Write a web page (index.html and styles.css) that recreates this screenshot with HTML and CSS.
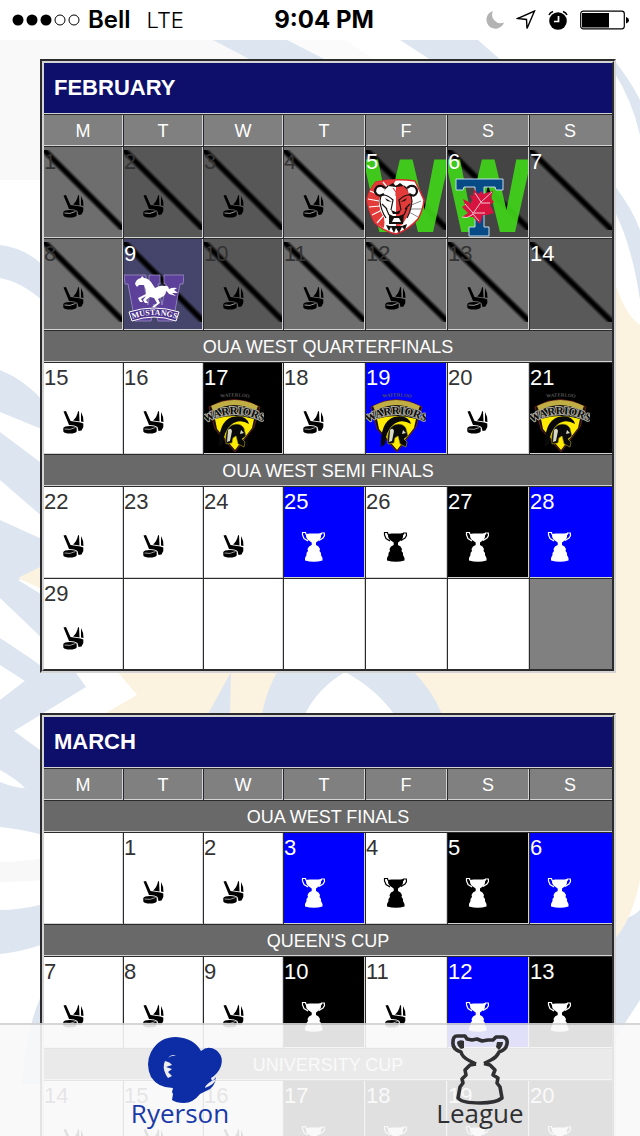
FILE: index.html
```html
<!DOCTYPE html>
<html lang="en">
<head>
<meta charset="utf-8">
<meta name="viewport" content="width=device-width, initial-scale=1">
<title>Schedule</title>
<link rel="stylesheet" href="styles.css">
</head>
<body>
<svg class="sprite" aria-hidden="true">
  <symbol id="puck" viewBox="0 0 60 60">
    <path d="M19.500 18.500L22 18L26.500 28L36.500 29.500L39.300 30.500V34L37.500 37.500L34.500 38L33.500 34Q31 32 25 32L24 29.500Z"/>
    <path d="M34 18.500L35 18L35.500 28.500L29 27.500Q33 24 34 18.500ZM37 19Q39.500 23 39.500 29L37 28.500Z"/>
    <path d="M19.300 35Q20 33 26 33Q32.300 33 32.700 35V38.500Q31 40.500 26 40.500Q20.500 40.500 19.300 38.500Z"/>
    <path class="puck-line" d="M20.500 36Q26 37.500 31.500 34.500" fill="none"/>
  </symbol>
  <symbol id="trophy" viewBox="0 0 60 60">
    <path d="M22 17L25.500 16.500L34.500 16.500L37 16Q37.500 20.500 36 22.500L32 25.500V28L34.500 29.500L36 32L35.500 34L37 36L37 38L38.500 41V43.500Q30 46 21 43.500V41L22.500 38V36L24 34L23.500 32L25 29.500L27.700 28V25.500L23.500 22.500Q21.500 20.500 22 17Z"/>
    <path d="M22 17.500L21.500 15.500H18.500V18L20 21.500L24 24M37 18L37.500 16H40.300L40.500 18.500L39 21L35 23.500" fill="none" stroke="currentColor" stroke-width="1.200"/>
  </symbol>
  <symbol id="lion" viewBox="0 0 60 60">
    <path d="M10 5Q30 1 49 4Q53 12 58 23Q57 33 52 42Q42 53 30 57Q17 54 9 46Q3 36 1 23Q3 13 10 5Z" fill="#fff" stroke="#e0252b" stroke-width="1.500"/>
    <path d="M10 5Q20 3 30 3L26 10Q14 14 13 24Q13 34 18 40L19 52L9 46Q3 36 1 23Q3 13 10 5Z" fill="#e33a3a"/>
    <path d="M4 14L14 18M2 22L13 24M3 30L14 29M6 38L16 33M11 46L18 38M18 52L20 44M17 5L22 11" stroke="#fff" stroke-width="1.200"/>
    <path d="M30 8L38 9Q45 14 46 23Q45 34 41 40L36 48L30 50Z" fill="#e33a3a"/>
    <path d="M30 8L22 9Q15 14 14 23Q15 34 20 40L25 48L30 50Z" fill="#fff"/>
    <path d="M22 9Q15 14 14 24Q15 34 20 41M38 9Q45 14 46 24Q45 34 41 41M17 18Q22 18 27 23L25 33M43 18Q38 18 33 23L35 33M16 27L21 32M44 27L39 32M23 38L20 31M38 38L41 31" fill="none" stroke="#16110f" stroke-width="1.200"/>
    <path d="M18 17Q12 21 9 15Q9 8 16 9L19 11M43 17Q49 21 51 15Q51 8 44 9L41 11" fill="#fff" stroke="#16110f" stroke-width="2.200"/>
    <path d="M19 21L26 25L21 24ZM41 21L34 25L39 24ZM25 33L30 35L35 33L33 37H27ZM23 37L27 39H33L38 37L37 47H23ZM20 48L23 54L25 50L28 56L30 51L33 56L36 50L39 53L41 47L36 49H24ZM22 9L27 6L30 9L34 6L38 9L30 10Z" fill="#16110f"/>
    <path d="M26 45L28 41H33L35 45Z" fill="#fff"/>
    <path d="M27 11L30 15L33 11M30 15V19" fill="none" stroke="#e33a3a" stroke-width="1.200"/>
    <path d="M43 29L55 24M43 32L56 32M43 35L52 40" stroke="#555" stroke-width=".7"/>
  </symbol>
  <symbol id="toronto" viewBox="0 0 60 60">
    <path d="M8 2H55V13H48L47 10H36V50H41V59H21V50H27V10H16L15 13H8Z" fill="#064a86" stroke="#c5d9ec" stroke-width="1"/>
    <path d="M26 12L30 17L34 14L35 17L45 14L43 21L46 25L42 28L46 36L39 38L35 38L32 47L25 40L14 40L20 36L14 30L17 28L15 22L21 25L23 27L24 23L22 18L25 19Z" fill="#d6143f"/>
    <path d="M24 38L33 25L44 15M33 25L27 16M33 26L42 26M25 36L17 27M26 36L37 36M25 37L31 44M24 38Q19 42 14 40" fill="none" stroke="#fbd9e2" stroke-width=".9"/>
  </symbol>
  <symbol id="mustangs" viewBox="0 0 60 60">
    <path d="M0 6H22V15H20L24 36L27 15H25V6H36V15H34L38 36L42 15H40V6H60L59 15H56L49 52H34L30 35L27 52H11L4 15H1Z" fill="#5c4099" stroke="#a99bd0" stroke-width=".7"/>
    <path d="M11 15Q12 10 17 9L18 7L20 9Q25 9 29 16L31 19Q36 16 41 17Q44 16 45 20Q49 18 53 19L50 21L54 24L48 24L52 27L45 25Q43 22 42 22Q42 26 38 28L34 30L36 34L31 38H28L33 34L30 29L26 28L22 31L24 34L21 34L19 31L22 27L17 30L19 33H16L14 29L22 25Q22 20 20 16L15 16L13 18Z" fill="#fff"/>
    <path d="M5 43Q30 35 55 43L52 52Q30 44 8 52Z" fill="#4c338b" stroke="#fff" stroke-width="1"/>
    <path id="mustangs-arc" d="M8 50Q30 42 53 50" fill="none"/>
    <text class="logo-text" font-size="8" fill="#fff" text-anchor="middle"><textPath href="#mustangs-arc" startOffset="50%">MUSTANGS</textPath></text>
  </symbol>
  <symbol id="warriors" viewBox="0 0 60 60">
    <path id="waterloo-arc" d="M12 6Q30 1 50 6" fill="none"/>
    <text class="logo-text" font-size="5" fill="#555" text-anchor="middle"><textPath href="#waterloo-arc" startOffset="50%">WATERLOO</textPath></text>
    <path d="M5 14Q30 -1 56 14L50 34L31 59L11 36Z" fill="#15120c" stroke="#7d2520" stroke-width=".8"/>
    <path d="M7 13Q30 1 54 13L52 18Q30 6 9 18Z" fill="#c0ae45"/>
    <path d="M11 26Q30 20 50 26L48 35L31 57L13 36Z" fill="#ffec00"/>
    <path id="warriors-arc" d="M1 30Q30 13 60 29" fill="none"/>
    <text class="logo-text" font-size="11" fill="#0b0b0b" stroke="#aaa99b" stroke-width="2" paint-order="stroke" text-anchor="middle"><textPath href="#warriors-arc" startOffset="50%">WARRIORS</textPath></text>
    <path d="M15 54Q14 29 28 24Q42 21 45 31Q35 25 27 32Q20 38 19 51Z" fill="#090909"/>
    <path d="M22 51Q20 36 28 32Q36 29 40 35L42 43L38 46L41 49L40 54L34 51L32 43L29 45L28 50Z" fill="#090909" stroke="#b7a70a" stroke-width=".6"/>
    <path d="M24 37Q27 34 28 38L26 48L23 49ZM37 37L40 40L36 41Z" fill="#d8d8c6"/>
  </symbol>
</svg>

<div class="app">
  <header class="status">
    <div class="status-left">
      <svg width="68" height="12" viewBox="0 0 68 12" role="img" aria-label="Signal strength">
        <circle cx="6" cy="6" r="5.500"/><circle cx="20" cy="6" r="5.500"/><circle cx="34" cy="6" r="5.500"/>
        <circle cx="48" cy="6" r="5" fill="none" stroke="#000"/><circle cx="62" cy="6" r="5" fill="none" stroke="#000"/>
      </svg>
      <span class="carrier">Bell</span>
      <span class="network">LTE</span>
    </div>
    <time class="clock">9:04 PM</time>
    <div class="status-right">
      <svg width="18" height="20" viewBox="0 0 18 20" aria-hidden="true"><path d="M7 1A9 9 0 1 0 18 12.500A8.500 8.500 0 0 1 7 1Z" fill="#b3b3b3"/></svg>
      <svg width="20" height="20" viewBox="0 0 20 20" aria-hidden="true"><path d="M18.500 1L11 18.500L10.500 9.500L1.500 8.500Z" fill="none" stroke="#000" stroke-width="1.400"/></svg>
      <svg width="20" height="20" viewBox="0 0 20 20" aria-hidden="true"><circle cx="10" cy="11" r="8.800"/><path d="M10.500 6V11.500H6" fill="none" stroke="#fff" stroke-width="1.700"/><path d="M1 5Q2 2.500 5 1.500M19 5Q18 2.500 15 1.500" fill="none" stroke="#000" stroke-width="1.500"/></svg>
      <svg width="49" height="20" viewBox="0 0 49 20" role="img" aria-label="Battery"><rect x=".7" y="1.200" width="43.600" height="17.600" rx="2.500" fill="none" stroke="#000" stroke-width="1.200"/><rect x="2" y="3" width="27" height="14.500"/><path d="M46 7Q49 8 49 10.200Q49 12.500 46 13.500Z"/></svg>
    </div>
  </header>

  <div class="stage">
    <svg class="backdrop" viewBox="0 0 640 1096" preserveAspectRatio="xMidYMin slice" aria-hidden="true">
      <rect width="640" height="1096" fill="#fff"/>
      <path d="M0 0H345L372 19V140H0Z" fill="#f9f9f9"/>
      <path d="M283 0H345L372 19H325Z" fill="#fbfbfb"/>
      <g fill="#dce5f0">
        <path d="M213 0H287L330 22H255ZM400 0H478L503 22H434Z"/>
        <path d="M614 32Q632 60 640 95V60Q630 40 614 20ZM614 170Q632 205 640 260V190Q632 168 614 145Z"/>
        <path d="M0 205Q25 208 44 226V262Q22 242 0 238ZM0 330Q25 340 44 362V390L0 372Z"/>
        <path d="M0 392L44 425V478L0 440ZM0 480L44 500V535L18 540L44 556V600L0 558ZM0 598L30 618L44 628V642L25 641L0 625Z"/>
        <path d="M0 660L35 633H76L86 647L14 691L44 713V795Q20 789 0 787V742Q15 748 25 748Q15 738 0 730Z"/>
        <path d="M0 870Q20 870 44 864V904Q20 912 0 914ZM44 950Q26 985 22 1044H44ZM614 880Q630 880 640 870V960L614 1000Z"/>
      </g>
      <path d="M44 525L18 538L44 550Z" fill="#fbf3e0"/>
      <path d="M116 630L137 655L104 674H614V900Q632 880 640 840V285Q625 275 614 240V630Z" fill="#fbf3e0"/>
      <path d="M231 632L208 674H230ZM278 630Q266 652 262 674H442Q432 650 412 630Z" fill="#dce5f0"/>
      <path d="M345 632Q318 648 305 674H394Q375 648 345 632Z" fill="#fff"/>
      <path d="M0 822Q20 822 44 818V840Q20 842 0 842Z" fill="#f8f8f8"/>
    </svg>

    <main class="calendar">
      <section class="month">
        <table>
          <colgroup><col class="narrow"><col class="narrow"><col class="narrow"><col><col><col><col></colgroup>
          <thead>
            <tr class="title"><th colspan="7">FEBRUARY</th></tr>
            <tr class="weekdays"><th>M</th><th>T</th><th>W</th><th>T</th><th>F</th><th>S</th><th>S</th></tr>
          </thead>
          <tbody>
            <tr class="week">
              <td class="past"><div class="day"><span>1</span><svg><use href="#puck"/></svg></div></td>
              <td class="past dim"><div class="day"><span>2</span><svg><use href="#puck"/></svg></div></td>
              <td class="past dim"><div class="day"><span>3</span><svg><use href="#puck"/></svg></div></td>
              <td class="past"><div class="day"><span>4</span><svg><use href="#puck"/></svg></div></td>
              <td class="past game"><div class="day"><b class="win">W</b><span>5</span><svg><use href="#lion"/></svg></div></td>
              <td class="past game"><div class="day"><b class="win">W</b><span>6</span><svg><use href="#toronto"/></svg></div></td>
              <td class="past off"><div class="day"><span>7</span></div></td>
            </tr>
            <tr class="week">
              <td class="past"><div class="day"><span>8</span><svg><use href="#puck"/></svg></div></td>
              <td class="past home-past"><div class="day"><span>9</span><svg><use href="#mustangs"/></svg></div></td>
              <td class="past dim"><div class="day"><span>10</span><svg><use href="#puck"/></svg></div></td>
              <td class="past"><div class="day"><span>11</span><svg><use href="#puck"/></svg></div></td>
              <td class="past"><div class="day"><span>12</span><svg><use href="#puck"/></svg></div></td>
              <td class="past"><div class="day"><span>13</span><svg><use href="#puck"/></svg></div></td>
              <td class="past off"><div class="day"><span>14</span></div></td>
            </tr>
            <tr class="band"><th colspan="7">OUA WEST QUARTERFINALS</th></tr>
            <tr class="week">
              <td><div class="day"><span>15</span><svg><use href="#puck"/></svg></div></td>
              <td><div class="day"><span>16</span><svg><use href="#puck"/></svg></div></td>
              <td class="away"><div class="day"><span>17</span><svg><use href="#warriors"/></svg></div></td>
              <td><div class="day"><span>18</span><svg><use href="#puck"/></svg></div></td>
              <td class="home"><div class="day"><span>19</span><svg><use href="#warriors"/></svg></div></td>
              <td><div class="day"><span>20</span><svg><use href="#puck"/></svg></div></td>
              <td class="away"><div class="day"><span>21</span><svg><use href="#warriors"/></svg></div></td>
            </tr>
            <tr class="band"><th colspan="7">OUA WEST SEMI FINALS</th></tr>
            <tr class="week">
              <td><div class="day"><span>22</span><svg><use href="#puck"/></svg></div></td>
              <td><div class="day"><span>23</span><svg><use href="#puck"/></svg></div></td>
              <td><div class="day"><span>24</span><svg><use href="#puck"/></svg></div></td>
              <td class="home"><div class="day"><span>25</span><svg><use href="#trophy"/></svg></div></td>
              <td><div class="day"><span>26</span><svg><use href="#trophy"/></svg></div></td>
              <td class="away"><div class="day"><span>27</span><svg><use href="#trophy"/></svg></div></td>
              <td class="home"><div class="day"><span>28</span><svg><use href="#trophy"/></svg></div></td>
            </tr>
            <tr class="week">
              <td><div class="day"><span>29</span><svg><use href="#puck"/></svg></div></td>
              <td></td><td></td><td></td><td></td><td></td><td class="blank"></td>
            </tr>
          </tbody>
        </table>
      </section>

      <section class="month">
        <table>
          <colgroup><col class="narrow"><col class="narrow"><col class="narrow"><col><col><col><col></colgroup>
          <thead>
            <tr class="title"><th colspan="7">MARCH</th></tr>
            <tr class="weekdays"><th>M</th><th>T</th><th>W</th><th>T</th><th>F</th><th>S</th><th>S</th></tr>
          </thead>
          <tbody>
            <tr class="band"><th colspan="7">OUA WEST FINALS</th></tr>
            <tr class="week">
              <td></td>
              <td><div class="day"><span>1</span><svg><use href="#puck"/></svg></div></td>
              <td><div class="day"><span>2</span><svg><use href="#puck"/></svg></div></td>
              <td class="home"><div class="day"><span>3</span><svg><use href="#trophy"/></svg></div></td>
              <td><div class="day"><span>4</span><svg><use href="#trophy"/></svg></div></td>
              <td class="away"><div class="day"><span>5</span><svg><use href="#trophy"/></svg></div></td>
              <td class="home"><div class="day"><span>6</span><svg><use href="#trophy"/></svg></div></td>
            </tr>
            <tr class="band"><th colspan="7">QUEEN'S CUP</th></tr>
            <tr class="week">
              <td><div class="day"><span>7</span><svg><use href="#puck"/></svg></div></td>
              <td><div class="day"><span>8</span><svg><use href="#puck"/></svg></div></td>
              <td><div class="day"><span>9</span><svg><use href="#puck"/></svg></div></td>
              <td class="away"><div class="day"><span>10</span><svg><use href="#trophy"/></svg></div></td>
              <td><div class="day"><span>11</span><svg><use href="#puck"/></svg></div></td>
              <td class="home"><div class="day"><span>12</span><svg><use href="#trophy"/></svg></div></td>
              <td class="away"><div class="day"><span>13</span><svg><use href="#trophy"/></svg></div></td>
            </tr>
            <tr class="band"><th colspan="7">UNIVERSITY CUP</th></tr>
            <tr class="week">
              <td><div class="day"><span>14</span><svg><use href="#puck"/></svg></div></td>
              <td><div class="day"><span>15</span><svg><use href="#puck"/></svg></div></td>
              <td><div class="day"><span>16</span><svg><use href="#puck"/></svg></div></td>
              <td class="away"><div class="day"><span>17</span><svg><use href="#trophy"/></svg></div></td>
              <td class="away"><div class="day"><span>18</span><svg><use href="#trophy"/></svg></div></td>
              <td class="away"><div class="day"><span>19</span><svg><use href="#trophy"/></svg></div></td>
              <td class="away"><div class="day"><span>20</span><svg><use href="#trophy"/></svg></div></td>
            </tr>
          </tbody>
        </table>
      </section>
    </main>

    <nav class="tabs">
      <a class="tab tab-active" href="#ryerson">
        <svg width="84" height="72" viewBox="-10 0 84 72" aria-hidden="true">
          <path d="M53 18Q60 12 68 17Q76 23 73 33Q70 41 63 45L64 48Q67 46 68 44Q67 55 58 58L52 61Q45 70 36 70Q28 70 24 67L25 61L24 59L25 55Q10 55 3 44Q-3 31 3 19Q11 4 28 4Q46 5 53 18Z" fill="#0c2da6"/>
          <path d="M17 28Q14 34 18 42L20 45L24 43L20 39L24 36L18 34L24 32Q22 29 17 28ZM20 25Q24 20 28 23Q24 22 20 25ZM57 55Q58 50 68 46Q66 52 57 55Z" fill="#eee"/>
        </svg>
        <span>Ryerson</span>
      </a>
      <a class="tab" href="#league">
        <svg width="60" height="72" viewBox="0 0 60 72" aria-hidden="true">
          <path d="M26 31L20 28Q12 24 11 19Q2 16 3 9Q3 3 7 3L15 3L17 6L22 7L27 6L32 8L38 7L43 7L46 4L53 4Q58 5 57 11Q56 17 49 19Q47 24 41 27L34 30.500" fill="none" stroke="#303033" stroke-width="3.600" stroke-linejoin="round"/>
          <path d="M26 31L20 32L15 37L16 42L12 46L13 50L10 54L8 65Q12 70 30 70Q46 70 52 65L50 54L47 50L48 45L43 42L45 37L40 32L34 30.500" fill="none" stroke="#303033" stroke-width="3.600" stroke-linejoin="round"/>
          <path d="M7 9Q10 6 14 8L14 15L11 16Q7 13 7 9ZM53 9L47 9L46 14L49 17Q53 13 53 9Z" fill="#303033"/>
        </svg>
        <span>League</span>
      </a>
    </nav>
  </div>
</div>
</body>
</html>
```
FILE: styles.css
```css
* {
  box-sizing: border-box;
}

body {
  margin: 0;
  background: #fff;
  font-family: "Liberation Sans", Arial, sans-serif;
}

.sprite {
  display: none;
}

.app {
  display: flex;
  flex-direction: column;
  height: 100vh;
}

/* Status bar */
.status {
  display: grid;
  grid-template-columns: 1fr auto 1fr;
  align-items: center;
  flex: none;
  height: 40px;
  padding: 0 11px 0 12px;
  font-family: Inter, sans-serif;
  font-size: 24px;
  line-height: 40px;
}

.status-left,
.status-right {
  display: flex;
  align-items: center;
}

.status-left {
  gap: 8px;
}

.status-right {
  justify-content: flex-end;
  gap: 12px;
}

.carrier {
  font-weight: 600;
}

.network {
  margin-left: 8px;
  font-size: 22px;
  font-weight: 300;
}

.clock {
  padding-left: 7px;
  font-weight: 700;
}

/* Scrolling calendar over the faded crest */
.stage {
  position: relative;
  flex: 1;
  min-height: 0;
}

.backdrop {
  position: absolute;
  inset: 0;
  width: 100%;
  height: 100%;
}

.calendar {
  position: relative;
  display: flex;
  flex-direction: column;
  gap: 40px;
  height: 100%;
  padding: 19px 24px 0 40px;
  overflow-y: auto;
  scrollbar-width: none;
}

.month {
  flex: none;
  border: 2px solid #2b2b2d;
  border-right-color: #d3d3d3;
  border-bottom-color: #d3d3d3;
}

table {
  width: 100%;
  table-layout: fixed;
  border: 2px solid #d3d3d3;
  border-right-color: #2b2b2d;
  border-bottom-color: #2b2b2d;
  border-collapse: separate;
  border-spacing: 0;
}

.narrow {
  width: 80px;
}

th,
td {
  padding: 0;
  box-shadow: inset -1px -1px #2b2b2d, inset -2px -2px #d3d3d3;
}

th:last-child,
td:last-child {
  box-shadow: inset 0 -1px #2b2b2d, inset 0 -2px #d3d3d3;
}

.title th {
  height: 52px;
  padding: 0 10px 2px;
  background: #0d0f6b;
  color: #fff;
  font-size: 22px;
  text-align: left;
}

.weekdays th,
.band th {
  height: 32px;
  background: #808080;
  color: #fff;
  font-size: 18px;
  font-weight: 400;
  text-align: center;
}

.weekdays th {
  padding-right: 2px;
}

.band th {
  background: #696969;
}

.week td {
  height: 92px;
  background-color: #fff;
  color: #333;
  vertical-align: top;
}

.week:last-child td {
  height: 90px;
  box-shadow: inset -1px 0 #2b2b2d, inset -2px 0 #d3d3d3;
}

.week:last-child td:last-child {
  box-shadow: none;
}

.day {
  position: relative;
  height: 90px;
}

.day span {
  position: relative;
  display: block;
  height: 30px;
  font-size: 22px;
  line-height: 30px;
}

.day svg {
  position: relative;
  display: block;
  width: 60px;
  height: 60px;
  color: #000;
  fill: currentColor;
}

.puck-line {
  stroke: #999;
  stroke-width: 1px;
}

.logo-text {
  font-family: "Liberation Serif", serif;
  font-weight: 700;
}

.week .past {
  background-color: #6e6e6e;
  background-image: linear-gradient(to top right, transparent 46%, #000 49%, #000 51%, transparent 54%);
  background-position: 0 3px;
  background-size: 100% 80px;
  background-repeat: no-repeat;
}

.week .dim {
  background-color: #575757;
}

.week .off {
  background-color: #595959;
  color: #fff;
}

.week .game {
  background-color: #444;
  color: #fff;
}

.week .home-past {
  background-color: #45456b;
  color: #fff;
}

.week .home {
  background-color: #00f;
  color: #fff;
}

.week .away {
  background-color: #000;
  color: #fff;
}

.week .blank {
  background-color: #808080;
}

.week .home svg,
.week .away svg {
  color: #fff;
}

/* Result marker behind the opponent's logo */
.win {
  position: absolute;
  inset: 0 2px 0 0;
  display: flex;
  align-items: center;
  justify-content: center;
  padding-top: 10px;
  overflow: hidden;
  color: rgba(64, 212, 26, 0.92);
  font-family: "Liberation Sans Narrow", Roboto, sans-serif;
  font-size: 102px;
  line-height: 90px;
}

/* Bottom tabs */
.tabs {
  position: absolute;
  inset: auto 0 0;
  display: grid;
  grid-template-columns: 1fr 1fr;
  height: 113px;
  padding: 8px 10px 0 30px;
  border-top: 2px solid rgba(210, 210, 210, 0.9);
  background: rgba(248, 248, 248, 0.9);
  background-clip: padding-box;
}

.tab {
  display: flex;
  flex-direction: column;
  align-items: center;
  color: #303033;
  font-family: "Open Sans", sans-serif;
  font-size: 26px;
  line-height: 16px;
  text-decoration: none;
}

.tab-active {
  color: #1a3aa8;
}

.tab svg {
  display: block;
}
```
